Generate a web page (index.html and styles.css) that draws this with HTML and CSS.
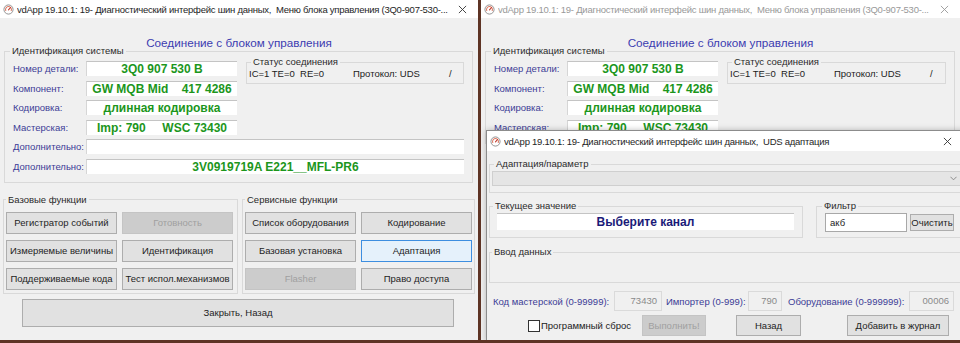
FILE: index.html
```html
<!DOCTYPE html>
<html lang="ru">
<head>
    <meta charset="UTF-8">
    <title>vdApp - Меню блока управления</title>
    <link rel="stylesheet" href="styles.css">
</head>
<body>
    <div class="screen">

        <!-- main control unit menu -->
        <div class="window window-left">
            <div class="titlebar">
                <svg class="app-icon" viewBox="0 0 12 12"><circle cx="6" cy="6" r="5" fill="#fff" stroke="#8a8a8a" stroke-width="1"/><path d="M3.2 7.6 A3.2 3.2 0 1 1 8.8 7.6" fill="none" stroke="#d9705a" stroke-width="1.1"/><path d="M6 6.4 L8.2 3.8" stroke="#c0392b" stroke-width="1.2" stroke-linecap="round"/></svg>
                <span class="titlebar-text">vdApp 19.10.1: 19- Диагностический интерфейс шин данных,&nbsp; Меню блока управления (3Q0-907-530-...</span>
                <svg class="close" viewBox="0 0 10 10"><path d="M1 1 L9 9 M9 1 L1 9" stroke="#333" stroke-width="1"/></svg>
            </div>

            <div class="heading">Соединение с блоком управления</div>

            <fieldset class="group ident">
                <legend>Идентификация системы</legend>
                <div class="ident-grid">
                    <span class="label row-label">Номер детали:</span>
                    <div class="field">3Q0 907 530 B</div>
                    <fieldset class="group status">
                        <legend>Статус соединения</legend>
                        <div class="status-line">
                            <span class="st-ic">IC=1 TE=0&nbsp; RE=0</span>
                            <span class="st-proto">Протокол: UDS</span>
                            <span>/</span>
                        </div>
                    </fieldset>
                    <span class="label row-label">Компонент:</span>
                    <div class="field">GW MQB Mid&nbsp;&nbsp;&nbsp;&nbsp;417 4286</div>
                    <span class="label row-label">Кодировка:</span>
                    <div class="field">длинная кодировка</div>
                    <span class="label row-label">Мастерская:</span>
                    <div class="field">Imp: 790&nbsp;&nbsp;&nbsp;&nbsp; WSC 73430</div>
                    <span class="label row-label">Дополнительно:</span>
                    <div class="field wide"></div>
                    <span class="label row-label">Дополнительно:</span>
                    <div class="field wide">3V0919719A E221__MFL-PR6</div>
                </div>
            </fieldset>

            <div class="funcs">
                <fieldset class="group func-base">
                    <legend>Базовые функции</legend>
                    <div class="btn-grid">
                        <button class="btn">Регистратор событий</button>
                        <button class="btn disabled">Готовность</button>
                        <button class="btn">Измеряемые величины</button>
                        <button class="btn">Идентификация</button>
                        <button class="btn">Поддерживаемые кода</button>
                        <button class="btn">Тест испол.механизмов</button>
                    </div>
                </fieldset>
                <fieldset class="group func-service">
                    <legend>Сервисные функции</legend>
                    <div class="btn-grid">
                        <button class="btn">Список оборудования</button>
                        <button class="btn">Кодирование</button>
                        <button class="btn">Базовая установка</button>
                        <button class="btn focus">Адаптация</button>
                        <button class="btn disabled">Flasher</button>
                        <button class="btn">Право доступа</button>
                    </div>
                </fieldset>
            </div>

            <button class="btn btn-close">Закрыть, Назад</button>
        </div>

        <!-- same menu, inactive, with adaptation dialog on top -->
        <div class="window window-right">
            <div class="titlebar inactive">
                <svg class="app-icon" viewBox="0 0 12 12"><circle cx="6" cy="6" r="5" fill="#fff" stroke="#8a8a8a" stroke-width="1"/><path d="M3.2 7.6 A3.2 3.2 0 1 1 8.8 7.6" fill="none" stroke="#d9705a" stroke-width="1.1"/><path d="M6 6.4 L8.2 3.8" stroke="#c0392b" stroke-width="1.2" stroke-linecap="round"/></svg>
                <span class="titlebar-text">vdApp 19.10.1: 19- Диагностический интерфейс шин данных,&nbsp; Меню блока управления (3Q0-907-530-...</span>
                <svg class="close" viewBox="0 0 10 10"><path d="M1 1 L9 9 M9 1 L1 9" stroke="#999" stroke-width="1"/></svg>
            </div>

            <div class="heading">Соединение с блоком управления</div>

            <fieldset class="group ident">
                <legend>Идентификация системы</legend>
                <div class="ident-grid">
                    <span class="label row-label">Номер детали:</span>
                    <div class="field">3Q0 907 530 B</div>
                    <fieldset class="group status">
                        <legend>Статус соединения</legend>
                        <div class="status-line">
                            <span class="st-ic">IC=1 TE=0&nbsp; RE=0</span>
                            <span class="st-proto">Протокол: UDS</span>
                            <span>/</span>
                        </div>
                    </fieldset>
                    <span class="label row-label">Компонент:</span>
                    <div class="field">GW MQB Mid&nbsp;&nbsp;&nbsp;&nbsp;417 4286</div>
                    <span class="label row-label">Кодировка:</span>
                    <div class="field">длинная кодировка</div>
                    <span class="label row-label">Мастерская:</span>
                    <div class="field">Imp: 790&nbsp;&nbsp;&nbsp;&nbsp; WSC 73430</div>
                </div>
            </fieldset>

            <div class="dialog">
                <div class="titlebar dialog-title">
                    <svg class="app-icon" viewBox="0 0 12 12"><circle cx="6" cy="6" r="5" fill="#fff" stroke="#8a8a8a" stroke-width="1"/><path d="M3.2 7.6 A3.2 3.2 0 1 1 8.8 7.6" fill="none" stroke="#d9705a" stroke-width="1.1"/><path d="M6 6.4 L8.2 3.8" stroke="#c0392b" stroke-width="1.2" stroke-linecap="round"/></svg>
                    <span class="titlebar-text">vdApp 19.10.1: 19- Диагностический интерфейс шин данных,&nbsp; UDS адаптация</span>
                    <svg class="close" viewBox="0 0 10 10"><path d="M1 1 L9 9 M9 1 L1 9" stroke="#333" stroke-width="1"/></svg>
                </div>

                <fieldset class="group adapt">
                    <legend>Адаптация/параметр</legend>
                    <div class="combo">
                        <svg class="chevron" viewBox="0 0 8 5"><path d="M0.5 0.5 L4 4 L7.5 0.5" fill="none" stroke="#808080" stroke-width="1"/></svg>
                    </div>
                </fieldset>

                <div class="dialog-row">
                    <fieldset class="group current">
                        <legend>Текущее значение</legend>
                        <div class="current-value">Выберите канал</div>
                    </fieldset>
                    <fieldset class="group filter">
                        <legend>Фильтр</legend>
                        <div class="filter-row">
                            <div class="filter-input">акб</div>
                            <button class="btn btn-clear">Очистить</button>
                        </div>
                    </fieldset>
                </div>

                <fieldset class="group input-group">
                    <legend>Ввод данных</legend>
                </fieldset>

                <div class="codes">
                    <span class="label code-label l-wsc">Код мастерской (0-99999):</span>
                    <div class="code-field w-wsc">73430</div>
                    <span class="label code-label l-imp">Импортер (0-999):</span>
                    <div class="code-field w-imp">790</div>
                    <span class="label code-label l-eq">Оборудование (0-999999):</span>
                    <div class="code-field w-eq">00006</div>
                </div>

                <div class="actions">
                    <label class="check"><span class="check-box"></span>Программный сброс</label>
                    <button class="btn disabled btn-run">Выполнить!</button>
                    <button class="btn btn-back">Назад</button>
                    <button class="btn btn-log">Добавить в журнал</button>
                </div>
            </div>
        </div>

    </div>
</body>
</html>
```

FILE: styles.css
```css
* {
    margin: 0;
    padding: 0;
    box-sizing: border-box;
}

body {
    background: #5e3425;
    font-family: "Liberation Sans", Arial, sans-serif;
    font-size: 9.5px;
    color: #222;
}

.screen {
    display: flex;
    gap: 3px;
    width: 960px;
    height: 343px;
    overflow: hidden;
}

.window {
    position: relative;
    background: #f0f0f0;
    height: 340px;
    overflow: hidden;
}

.window-left {
    width: 478px;
}

.window-right {
    width: 479px;
}

/* title bars */
.titlebar {
    height: 18px;
    background: #fff;
    display: flex;
    align-items: center;
    gap: 3px;
    padding: 0 11px 0 3px;
    font-size: 9.5px;
    letter-spacing: -0.25px;
    color: #1e1e1e;
    white-space: nowrap;
}

.titlebar.inactive {
    color: #999;
}

.titlebar-text {
    flex: 1;
    overflow: hidden;
}

.app-icon {
    width: 11px;
    height: 11px;
    flex-shrink: 0;
}

.close {
    width: 9px;
    height: 9px;
    flex-shrink: 0;
}

.heading {
    margin-top: 18px;
    text-align: center;
    color: #3c3cb0;
    font-size: 11.7px;
    line-height: 14px;
}

/* group boxes */
.group {
    border: 1px solid #d9d9d9;
    min-width: 0;
}

.group legend {
    padding: 0 2px;
    margin-left: -3px;
    line-height: 12px;
    color: #2a2a2a;
}

.label {
    color: #3c3c96;
    white-space: nowrap;
}

.ident {
    margin: -5px 5px 0 4px;
    padding: 4px 8px 8px 8px;
}

.ident-grid {
    display: grid;
    grid-template-columns: 73px 151px 1fr;
    grid-auto-rows: 15px;
    row-gap: 4.6px;
    align-items: center;
}

.row-label {
    grid-column: 1;
}

.field {
    grid-column: 2;
    height: 15px;
    background: #fff;
    border-top: 1px solid #c4c4c4;
    border-left: 1px solid #d6d6d6;
    color: #1c961c;
    font-weight: bold;
    font-size: 12px;
    line-height: 14px;
    text-align: center;
    white-space: nowrap;
}

.field.wide {
    grid-column: 2 / 4;
}

.status {
    grid-column: 3;
    grid-row: 1 / 3;
    align-self: start;
    margin: -5px 0 0 9px;
    padding: 0 2px 4px;
}

.status legend {
    margin-left: 2px;
}

.status-line {
    display: flex;
    line-height: 11px;
}

.st-ic {
    width: 104px;
}

.st-proto {
    width: 96px;
}

/* function buttons */
.funcs {
    display: flex;
    gap: 4px;
    margin: 11px 0 0 3px;
}

.funcs .group {
    padding: 6px 1px 3px 2px;
}

.funcs .group legend {
    margin-left: 0;
}

.func-base {
    width: 235px;
}

.func-service {
    width: 233px;
}

.btn-grid {
    display: grid;
    grid-template-columns: 111px 111px;
    grid-auto-rows: 22px;
    gap: 6px 5px;
}

.btn {
    display: flex;
    align-items: center;
    justify-content: center;
    background: #e1e1e1;
    border: 1px solid #adadad;
    font: inherit;
    color: #1e1e1e;
    white-space: nowrap;
}

.btn.disabled {
    background: #cccccc;
    border-color: #c4c4c4;
    color: #a0a0a0;
}

.btn.focus {
    background: #e5f1fb;
    border-color: #3d8ee0;
}

.btn-close {
    width: 432px;
    height: 28px;
    margin: 5px 0 0 22px;
}

/* adaptation dialog */
.dialog {
    position: absolute;
    left: 5px;
    top: 130px;
    width: 482px;
    height: 212px;
    background: #f0f0f0;
    border: 1px solid #8c8c8c;
    box-shadow: 0 0 6px rgba(0, 0, 0, 0.25);
}

.dialog-title {
    height: 20px;
    padding-right: 15px;
}

.adapt {
    margin: 7px 2px 0 2px;
    padding: 1px 2px 6px 2px;
}

.adapt legend,
.input-group legend {
    margin-left: 2px;
}

.combo {
    position: relative;
    height: 15px;
    background: #e5e5e5;
    border: 1px solid #cfcfcf;
}

.chevron {
    position: absolute;
    right: 4px;
    top: 4px;
    width: 7px;
    height: 5px;
}

.dialog-row {
    display: flex;
    gap: 13px;
    margin: 7px 2px 0 2px;
}

.current {
    width: 314px;
    padding: 1px 8px 6px 7px;
}

.current legend {
    margin-left: -4px;
}

.current-value {
    height: 17px;
    background: #fff;
    border-top: 1px solid #c4c4c4;
    color: #1a1a78;
    font-weight: bold;
    font-size: 12px;
    line-height: 16px;
    text-align: center;
}

.filter {
    flex: 1;
    padding: 1px 4px 5px 8px;
}

.filter-row {
    display: flex;
    align-items: center;
    gap: 3px;
}

.filter-input {
    width: 82px;
    height: 19px;
    background: #fff;
    border: 1px solid #a8a8a8;
    padding-left: 4px;
    line-height: 17px;
    color: #222;
}

.btn-clear {
    width: 44px;
    height: 17px;
}

.input-group {
    height: 37px;
    margin: 8px 2px 0 2px;
}

.codes {
    display: flex;
    align-items: center;
    margin: 8px 0 0 6px;
}

.l-wsc {
    width: 121px;
}

.l-imp {
    width: 82px;
    margin-left: 4px;
}

.l-eq {
    width: 121px;
    margin-left: 6px;
}

.code-field {
    height: 20px;
    border: 1px solid #dadada;
    color: #8a8a8a;
    text-align: right;
    line-height: 18px;
    padding-right: 4px;
}

.w-wsc {
    width: 48px;
}

.w-imp {
    width: 34px;
}

.w-eq {
    width: 45px;
}

.actions {
    display: flex;
    align-items: center;
    margin: 4px 0 0 41px;
}

.check {
    display: flex;
    align-items: center;
    color: #222;
    width: 114px;
}

.check-box {
    width: 12px;
    height: 12px;
    background: #fff;
    border: 1px solid #333;
    margin-right: 1px;
}

.btn-run {
    width: 64px;
    height: 21px;
}

.btn-back {
    width: 65px;
    height: 21px;
    margin-left: 30px;
}

.btn-log {
    width: 102px;
    height: 21px;
    margin-left: 46px;
}
```
